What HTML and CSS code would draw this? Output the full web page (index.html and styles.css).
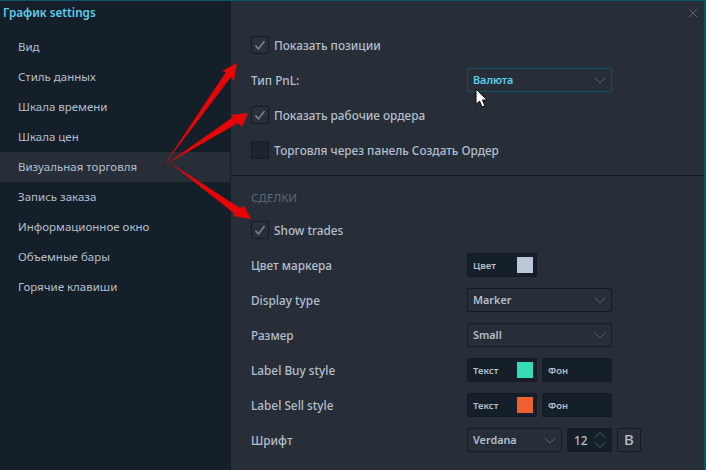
FILE: index.html
```html
<!DOCTYPE html>
<html lang="ru">
<head>
    <meta charset="UTF-8">
    <title>График settings</title>
    <link rel="stylesheet" href="styles.css">
</head>
<body>
    <div class="window">
        <aside class="sidebar">
            <div class="title">График settings</div>
            <ul class="menu">
                <li>Вид</li>
                <li>Стиль данных</li>
                <li>Шкала времени</li>
                <li>Шкала цен</li>
                <li class="active">Визуальная торговля</li>
                <li>Запись заказа</li>
                <li>Информационное окно</li>
                <li>Объемные бары</li>
                <li>Горячие клавиши</li>
            </ul>
        </aside>

        <main class="content">
            <svg class="close" width="10" height="10" viewBox="0 0 10 10"><path d="M1 1l8 8M9 1l-8 8"/></svg>

            <section class="group">
                <div class="row">
                    <span class="check"><svg width="18" height="18" viewBox="0 0 18 18"><path d="M4.5 9.5l3 3.5 6-8"/></svg></span>
                    <label>Показать позиции</label>
                </div>
                <div class="row">
                    <label class="name">Тип PnL:</label>
                    <div class="select focus">
                        <span>Валюта</span>
                        <svg class="chevron" width="12" height="7" viewBox="0 0 12 7"><path d="M.5.5L6 6 11.5.5"/></svg>
                    </div>
                </div>
                <div class="row">
                    <span class="check"><svg width="18" height="18" viewBox="0 0 18 18"><path d="M4.5 9.5l3 3.5 6-8"/></svg></span>
                    <label>Показать рабочие ордера</label>
                </div>
                <div class="row">
                    <span class="check empty"></span>
                    <label>Торговля через панель Создать Ордер</label>
                </div>
            </section>

            <section class="group trades">
                <h2>СДЕЛКИ</h2>
                <div class="row">
                    <span class="check"><svg width="18" height="18" viewBox="0 0 18 18"><path d="M4.5 9.5l3 3.5 6-8"/></svg></span>
                    <label>Show trades</label>
                </div>
                <div class="row">
                    <label class="name">Цвет маркера</label>
                    <div class="color"><span>Цвет</span><i class="swatch grey"></i></div>
                </div>
                <div class="row">
                    <label class="name">Display type</label>
                    <div class="select">
                        <span>Marker</span>
                        <svg class="chevron" width="12" height="7" viewBox="0 0 12 7"><path d="M.5.5L6 6 11.5.5"/></svg>
                    </div>
                </div>
                <div class="row">
                    <label class="name">Размер</label>
                    <div class="select">
                        <span>Small</span>
                        <svg class="chevron" width="12" height="7" viewBox="0 0 12 7"><path d="M.5.5L6 6 11.5.5"/></svg>
                    </div>
                </div>
                <div class="row">
                    <label class="name">Label Buy style</label>
                    <div class="color"><span>Текст</span><i class="swatch green"></i></div>
                    <div class="color"><span>Фон</span></div>
                </div>
                <div class="row">
                    <label class="name">Label Sell style</label>
                    <div class="color"><span>Текст</span><i class="swatch orange"></i></div>
                    <div class="color"><span>Фон</span></div>
                </div>
                <div class="row">
                    <label class="name">Шрифт</label>
                    <div class="select font">
                        <span>Verdana</span>
                        <svg class="chevron" width="12" height="7" viewBox="0 0 12 7"><path d="M.5.5L6 6 11.5.5"/></svg>
                    </div>
                    <div class="spinner">
                        <span>12</span>
                        <svg class="arrows" width="12" height="16" viewBox="0 0 12 16"><path d="M.5 6L6 .5 11.5 6M.5 10L6 15.5 11.5 10"/></svg>
                    </div>
                    <div class="bold">B</div>
                </div>
            </section>
        </main>
    </div>

    <!-- arrows and mouse pointer drawn on top of the screenshot -->
    <svg class="overlay" width="706" height="470" viewBox="0 0 706 470">
        <g class="red">
            <polygon points="164,165 226,72 222,71 237,63 234,81 231,77"/>
            <polygon points="165,165 233,117 231,115 248,113 242,127 238,123"/>
            <polygon points="169,162 235,214 233,216 251,219 244,206 240,208"/>
        </g>
        <polygon class="pointer" points="476,89 476,104.5 479.5,101 482,107 485,106 482.5,100 487,100"/>
    </svg>
</body>
</html>
```

FILE: styles.css
```css
* {
    box-sizing: border-box;
}
body {
    margin: 0;
    background-color: #272e38;
    font-family: "Noto Sans", sans-serif;
    font-size: 11.5px;
    color: #b4bfcc;
    overflow: hidden;
}
.window {
    display: flex;
    width: 706px;
    height: 470px;
    border-top: 1px solid #0b5468;
    border-right: 2px solid #0b5468;
}
.sidebar {
    width: 231px;
    flex: none;
    background-color: #151f29;
}
.title {
    height: 31px;
    padding: 3px 0 0 3px;
    color: #5dcdec;
    font-size: 11.7px;
    font-weight: 600;
}
.menu {
    list-style: none;
    margin: 0;
    padding: 0;
}
.menu li {
    height: 30px;
    margin-right: 1px;
    padding-left: 18px;
    line-height: 30px;
}
.menu .active {
    background-color: #272e38;
}
.content {
    position: relative;
    flex: 1;
    padding-top: 27px;
}
.close {
    position: absolute;
    top: 7px;
    right: 6px;
}
.close path {
    stroke: #5a636e;
    fill: none;
}
.group {
    display: flex;
    flex-direction: column;
    gap: 1px;
    padding: 0 20px;
}
.trades {
    margin-top: 8px;
    padding-top: 11px;
    border-top: 1px solid #12181f;
}
.trades h2 {
    height: 25px;
    margin: 0;
    color: #5f6873;
    font-size: 11.5px;
    font-weight: 400;
    line-height: 22px;
}
.row {
    display: flex;
    align-items: center;
    gap: 5px;
    height: 34px;
    font-size: 11.8px;
    font-weight: 500;
}
.row label {
    padding-bottom: 1px;
}
.name {
    width: 211px;
}
.check {
    width: 18px;
    height: 18px;
    flex: none;
    background-color: #272f3a;
    border: 1px solid #141b24;
    border-radius: 2px;
}
.check svg {
    display: block;
    margin: -1px;
}
.check path {
    stroke: #79838e;
    stroke-width: 1.6;
    fill: none;
}
.check.empty {
    background-color: #1b2530;
}
.select {
    display: flex;
    align-items: center;
    justify-content: space-between;
    width: 145px;
    height: 24px;
    padding: 0 5px;
    border: 1px solid #141b24;
    border-radius: 2px;
    background-color: #272e38;
    font-size: 10.8px;
    font-weight: 600;
}
.select span {
    padding-bottom: 2px;
}
.select.font {
    width: 95px;
}
.select.focus {
    border-color: #0b5468;
    color: #5dcdec;
}
.chevron path, .arrows path {
    stroke: #59626d;
    fill: none;
}
.color {
    display: flex;
    align-items: center;
    justify-content: space-between;
    width: 70px;
    height: 24px;
    padding: 0 3px 0 5px;
    border: 1px solid #141b24;
    border-radius: 2px;
    background-color: #151f29;
    font-size: 9.5px;
    font-weight: 600;
}
.swatch {
    width: 16px;
    height: 16px;
}
.swatch.grey {
    background-color: #bcc8d8;
}
.swatch.green {
    background-color: #36dcb8;
}
.swatch.orange {
    background-color: #f06030;
}
.spinner {
    display: flex;
    align-items: center;
    justify-content: space-between;
    width: 45px;
    height: 24px;
    padding: 0 5px 0 6px;
    border: 1px solid #141b24;
    border-radius: 2px;
    background-color: #151f29;
}
.bold {
    width: 24px;
    height: 24px;
    border: 1px solid #141b24;
    border-radius: 2px;
    font-size: 15px;
    line-height: 21px;
    text-align: center;
}
.overlay {
    position: absolute;
    top: 0;
    left: 0;
    pointer-events: none;
}
.red polygon {
    fill: #e80505;
}
.pointer {
    fill: #fff;
    stroke: #000;
    stroke-width: 1;
}
```
